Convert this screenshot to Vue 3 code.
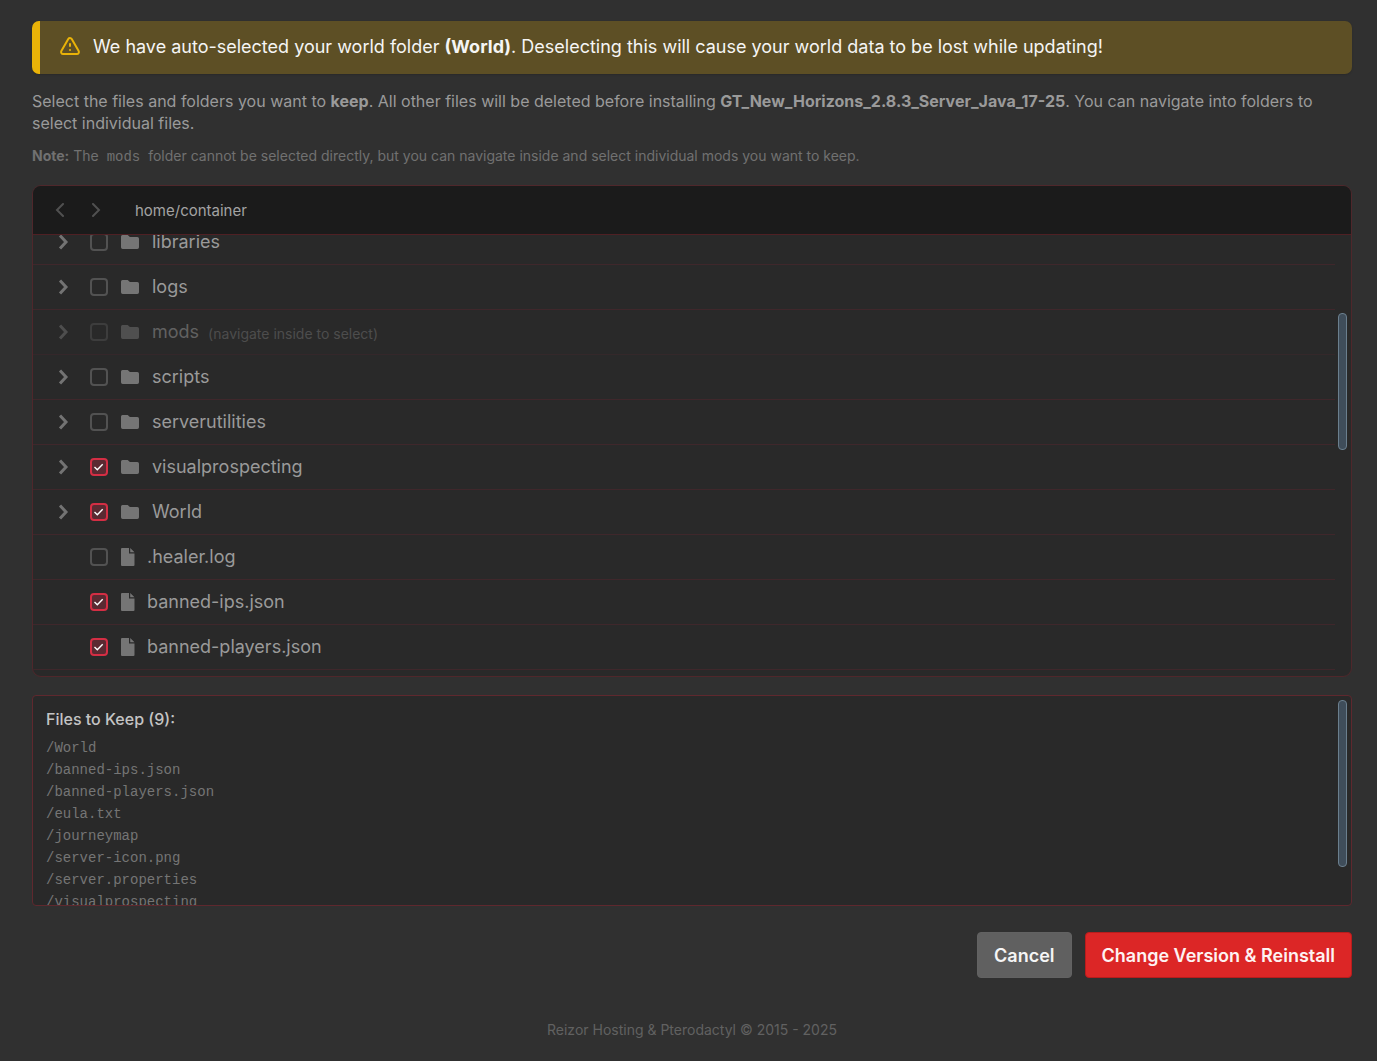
<script setup>
import { onMounted, ref } from 'vue'

const entries = ref([
  { name: 'libraries', folder: true, checked: false },
  { name: 'logs', folder: true, checked: false },
  { name: 'mods', folder: true, checked: false, locked: true },
  { name: 'scripts', folder: true, checked: false },
  { name: 'serverutilities', folder: true, checked: false },
  { name: 'visualprospecting', folder: true, checked: true },
  { name: 'World', folder: true, checked: true },
  { name: '.healer.log', folder: false, checked: false },
  { name: 'banned-ips.json', folder: false, checked: true },
  { name: 'banned-players.json', folder: false, checked: true },
])

const kept = [
  '/World',
  '/banned-ips.json',
  '/banned-players.json',
  '/eula.txt',
  '/journeymap',
  '/server-icon.png',
  '/server.properties',
  '/visualprospecting',
]

const list = ref(null)

onMounted(() => {
  list.value.scrollTop = 15
})
</script>

<template>
  <main class="page">
    <div class="alert" role="alert">
      <svg class="alert-icon" viewBox="0 0 24 24" aria-hidden="true">
        <path d="M12 9v2m0 4h.01m-6.938 4h13.856c1.54 0 2.502-1.667 1.732-3L13.732 4c-.77-1.333-2.694-1.333-3.464 0L3.34 16c-.77 1.333.192 3 1.732 3z" />
      </svg>
      <p>We have auto-selected your world folder <strong>(World)</strong>. Deselecting this will cause your world data to be lost while updating!</p>
    </div>

    <p class="intro">
      Select the files and folders you want to <strong>keep</strong>. All other files will be deleted before installing
      <strong>GT_New_Horizons_2.8.3_Server_Java_17-25</strong>. You can navigate into folders to select individual files.
    </p>
    <p class="note">
      <strong>Note:</strong> The <code>mods</code> folder cannot be selected directly, but you can navigate inside and select individual mods you want to keep.
    </p>

    <section class="browser">
      <header class="browser-head">
        <button class="nav" type="button" aria-label="Back" disabled>
          <svg viewBox="0 0 10 14"><path d="M8 1 2 7l6 6" /></svg>
        </button>
        <button class="nav" type="button" aria-label="Forward" disabled>
          <svg viewBox="0 0 10 14"><path d="m2 1 6 6-6 6" /></svg>
        </button>
        <span class="path">home/container</span>
      </header>
      <div class="browser-body">
        <ul ref="list" class="rows">
          <li v-for="entry in entries" :key="entry.name" class="row" :class="{ locked: entry.locked }">
            <button v-if="entry.folder" class="expand" type="button" :aria-label="'Open ' + entry.name">
              <svg viewBox="0 0 12 16"><path d="m3 1.500 6 6.500-6 6.500" /></svg>
            </button>
            <span v-else class="expand"></span>
            <label class="entry">
              <input v-model="entry.checked" type="checkbox" :disabled="entry.locked" />
              <svg v-if="entry.folder" class="folder" viewBox="0 0 18 14" aria-hidden="true">
                <path d="M1.500 0h5.200l2.200 2h7.400A1.700 1.700 0 0 1 18 3.700v8.600a1.700 1.700 0 0 1-1.700 1.700H1.700A1.700 1.700 0 0 1 0 12.300V1.500A1.500 1.500 0 0 1 1.500 0z" />
              </svg>
              <svg v-else class="file" viewBox="0 0 14 18" aria-hidden="true">
                <path d="M1 0h7v5.500h5.500V17a1 1 0 0 1-1 1H1a1 1 0 0 1-1-1V1a1 1 0 0 1 1-1zM9.200 0l4.300 4.300H9.200z" />
              </svg>
              <span class="name">{{ entry.name }}</span>
              <small v-if="entry.locked">(navigate inside to select)</small>
            </label>
          </li>
        </ul>
        <span class="thumb thumb-list"></span>
      </div>
    </section>

    <section class="keep">
      <div class="keep-scroll">
        <h2>Files to Keep (9):</h2>
        <ul>
          <li v-for="file in kept" :key="file">{{ file }}</li>
        </ul>
      </div>
      <span class="thumb thumb-keep"></span>
    </section>

    <div class="actions">
      <button class="btn cancel" type="button">Cancel</button>
      <button class="btn danger" type="button">Change Version &amp; Reinstall</button>
    </div>

    <footer>Reizor Hosting &amp; Pterodactyl © 2015 - 2025</footer>
  </main>
</template>

<style>
body {
  margin: 0;
  background: #303030;
}
</style>

<style scoped>
.page {
  box-sizing: border-box;
  padding: 21px 25px 20px 32px;
  font-family: Inter, "Liberation Sans", sans-serif;
  font-size: 18px;
  color: #9a9a9a;
}
p,
ul,
h2 {
  margin: 0;
  padding: 0;
  list-style: none;
}
.alert {
  display: flex;
  align-items: center;
  gap: 11px;
  box-sizing: border-box;
  min-height: 53px;
  padding: 0 18px 2px;
  border-left: 8px solid #eab308;
  border-radius: 7px;
  background: #5d4f25;
  color: #f5f5f4;
  line-height: 26px;
  box-shadow: 0 1px 2px rgba(0, 0, 0, 0.15);
}
.alert-icon {
  flex: none;
  width: 24px;
  height: 24px;
  fill: none;
  stroke: #eab308;
  stroke-width: 2;
  stroke-linecap: round;
  stroke-linejoin: round;
}
.intro {
  margin-top: 16px;
  font-size: 16px;
  line-height: 22px;
}
.note {
  margin-top: 13px;
  font-size: 14px;
  line-height: 18px;
  color: #717171;
}
.note code {
  padding: 0 4px;
  font-family: "Liberation Mono", monospace;
  font-size: 14px;
  line-height: 1;
}
.browser {
  margin-top: 20px;
  border: 1px solid #4f272b;
  border-radius: 9px;
  background: #292929;
  overflow: hidden;
}
.browser-head {
  display: flex;
  align-items: center;
  height: 48px;
  padding: 0 18px;
  border-bottom: 1px solid #4f2024;
  background: #1b1b1b;
}
.nav {
  display: grid;
  place-items: center;
  width: 18px;
  height: 24px;
  margin-right: 18px;
  padding: 0;
  border: 0;
  background: none;
}
.nav svg {
  width: 10px;
  height: 14px;
  fill: none;
  stroke: #505050;
  stroke-width: 2;
  stroke-linecap: round;
}
.path {
  margin-left: 12px;
  font-size: 15px;
  color: #a3a3a3;
}
.browser-body,
.keep {
  position: relative;
}
.rows {
  height: 441px;
  box-sizing: border-box;
  padding: 0 16px 6px 0;
  overflow-y: auto;
  scrollbar-width: none;
}
.row {
  display: flex;
  align-items: center;
  height: 44px;
  padding-left: 24px;
  border-bottom: 1px solid #3f272b;
}
.locked {
  opacity: 0.5;
}
.expand {
  width: 33px;
  height: 24px;
  padding: 0;
  border: 0;
  background: none;
  text-align: left;
}
.expand svg {
  display: block;
  width: 12px;
  height: 16px;
  margin: 4px 0;
  fill: none;
  stroke: #737373;
  stroke-width: 3;
}
.entry {
  display: flex;
  align-items: center;
}
.entry input {
  appearance: none;
  display: block;
  box-sizing: border-box;
  width: 18px;
  height: 18px;
  margin: 0 13px 0 0;
  border: 2px solid #525252;
  border-radius: 4px;
  background: transparent;
}
.entry input:checked {
  border-color: #d42e44;
  background: #5a2a32 url("data:image/svg+xml,%3Csvg xmlns='http://www.w3.org/2000/svg' viewBox='0 0 14 14'%3E%3Cpath d='M2.500 7l2.800 2.700 5.400-5.500' fill='none' stroke='%23fff' stroke-width='1.400'/%3E%3C/svg%3E") center / 14px 14px no-repeat;
}
.folder {
  width: 18px;
  height: 14px;
  margin-right: 13px;
  fill: #757575;
}
.file {
  width: 14px;
  height: 18px;
  margin-right: 12px;
  fill: #757575;
}
.name {
  line-height: 24px;
}
small {
  margin-left: 9px;
  padding-top: 2px;
  font-size: 14px;
  color: #717171;
}
.thumb {
  position: absolute;
  right: 4px;
  box-sizing: border-box;
  width: 9px;
  border: 1px solid #6b7f8e;
  border-radius: 4px;
  background: #3f4d5a;
}
.thumb-list {
  top: 78px;
  height: 137px;
}
.thumb-keep {
  top: 4px;
  height: 167px;
}
.keep {
  margin-top: 18px;
  border: 1px solid #5f282e;
  border-radius: 4px;
  background: #292929;
}
.keep-scroll {
  box-sizing: border-box;
  height: 209px;
  padding: 13px;
  overflow-y: auto;
  scrollbar-width: none;
}
h2 {
  margin-bottom: 7px;
  font-size: 16px;
  font-weight: 500;
  line-height: 21px;
  color: #c4c4c4;
}
.keep li {
  font-family: "Liberation Mono", monospace;
  font-size: 14px;
  line-height: 22px;
  color: #757575;
}
.actions {
  display: flex;
  justify-content: flex-end;
  gap: 13px;
  margin-top: 26px;
}
.btn {
  min-height: 46px;
  padding: 0 16px;
  border: 1px solid #626262;
  border-radius: 4px;
  background: #606060;
  color: #f5f5f5;
  font-family: inherit;
  font-size: 18px;
  font-weight: 600;
}
.danger {
  border-color: #b91c1c;
  background: #dc2626;
  color: #fef2f2;
}
footer {
  margin-top: 42px;
  font-size: 14px;
  line-height: 20px;
  text-align: center;
  color: #616161;
}
</style>
